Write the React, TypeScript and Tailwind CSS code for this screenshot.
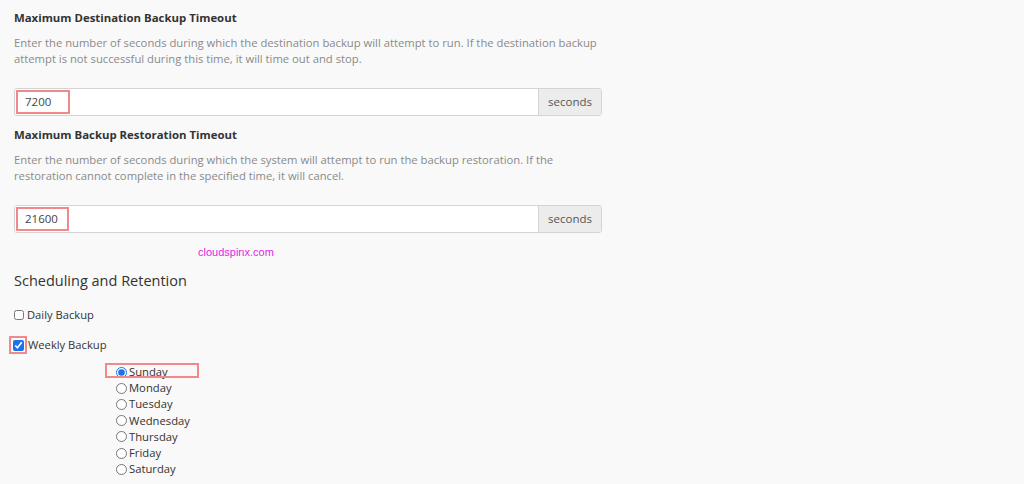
import React from "react";

const days = ["Sunday", "Monday", "Tuesday", "Wednesday", "Thursday", "Friday", "Saturday"];

function Field({ title, desc, value, boxW }: { title: string; desc: React.ReactNode; value: string; boxW: string }) {
  return (
    <div className="flex flex-col">
      <div className="text-[11.4px] font-bold text-[#333] leading-[16px]">{title}</div>
      <div className="mt-[9px] text-[11.25px] leading-[16px] text-[#8a8a8a] w-[640px]">{desc}</div>
      <div className="mt-[21px] flex w-[588px] h-[28px] rounded-[3px] border border-[#d4d4d4] overflow-hidden">
        <div className="flex-1 bg-white flex items-center pl-[1px]">
          <div className={`${boxW} h-[24px] border-2 border-[#f08a8a] flex items-center pl-[7px] text-[11.5px] text-[#444]`}>
            {value}
          </div>
        </div>
        <div className="w-[63px] bg-[#ececec] border-l border-[#d4d4d4] flex items-center justify-center text-[11.5px] text-[#555]">
          seconds
        </div>
      </div>
    </div>
  );
}

export default function App() {
  return (
    <div className="w-[1024px] h-[484px] bg-[#f9f9f9] overflow-hidden" style={{ fontFamily: '"Open Sans", sans-serif' }}>
      <div className="pl-[14px] pt-[10px]">
        <Field
          title="Maximum Destination Backup Timeout"
          desc={
            <>
              Enter the number of seconds during which the destination backup will attempt to run. If the destination backup
              <br />
              attempt is not successful during this time, it will time out and stop.
            </>
          }
          value="7200"
          boxW="w-[54px]"
        />
        <div className="mt-[11px]">
          <Field
            title="Maximum Backup Restoration Timeout"
            desc={
              <>
                Enter the number of seconds during which the system will attempt to run the backup restoration. If the
                <br />
                restoration cannot complete in the specified time, it will cancel.
              </>
            }
            value="21600"
            boxW="w-[53px]"
          />
        </div>
        <div
          className="mt-[12px] ml-[184px] text-[11px] leading-[14px] text-[#e61ee6]"
          style={{ fontFamily: '"Liberation Sans", Arial, sans-serif' }}
        >
          cloudspinx.com
        </div>
        <div className="mt-[12px] text-[14.5px] leading-[20px] text-[#333]">Scheduling and Retention</div>
        <div className="mt-[16px] flex items-center gap-[3px] text-[11.2px] text-[#333] leading-[16px]">
          <input type="checkbox" className="w-[10px] h-[10px] m-0" readOnly />
          <span>Daily Backup</span>
        </div>
        <div className="mt-[13px] flex items-center text-[11.2px] text-[#333] leading-[16px] -ml-[5px]">
          <div className="w-[18px] h-[18px] border-2 border-[#f08a8a] flex items-center justify-center">
            <input type="checkbox" checked readOnly className="w-[11px] h-[11px] m-0 accent-[#1a73e8]" />
          </div>
          <span className="ml-[1px]">Weekly Backup</span>
        </div>
        <div className="mt-[9px] ml-[91px] relative">
          <div className="absolute left-0 top-0 w-[94px] h-[15px] border-2 border-[#f08a8a]" />
          <div className="flex flex-col pl-[11px] pt-[1px]">
            {days.map((d, i) => (
              <label key={d} className="flex items-center gap-[2px] text-[11.25px] leading-[16.2px] text-[#333] h-[16.2px]">
                <input type="radio" name="day" checked={i === 0} readOnly className="w-[11px] h-[11px] m-0 accent-[#1a73e8]" />
                <span>{d}</span>
              </label>
            ))}
          </div>
        </div>
      </div>
    </div>
  );
}
